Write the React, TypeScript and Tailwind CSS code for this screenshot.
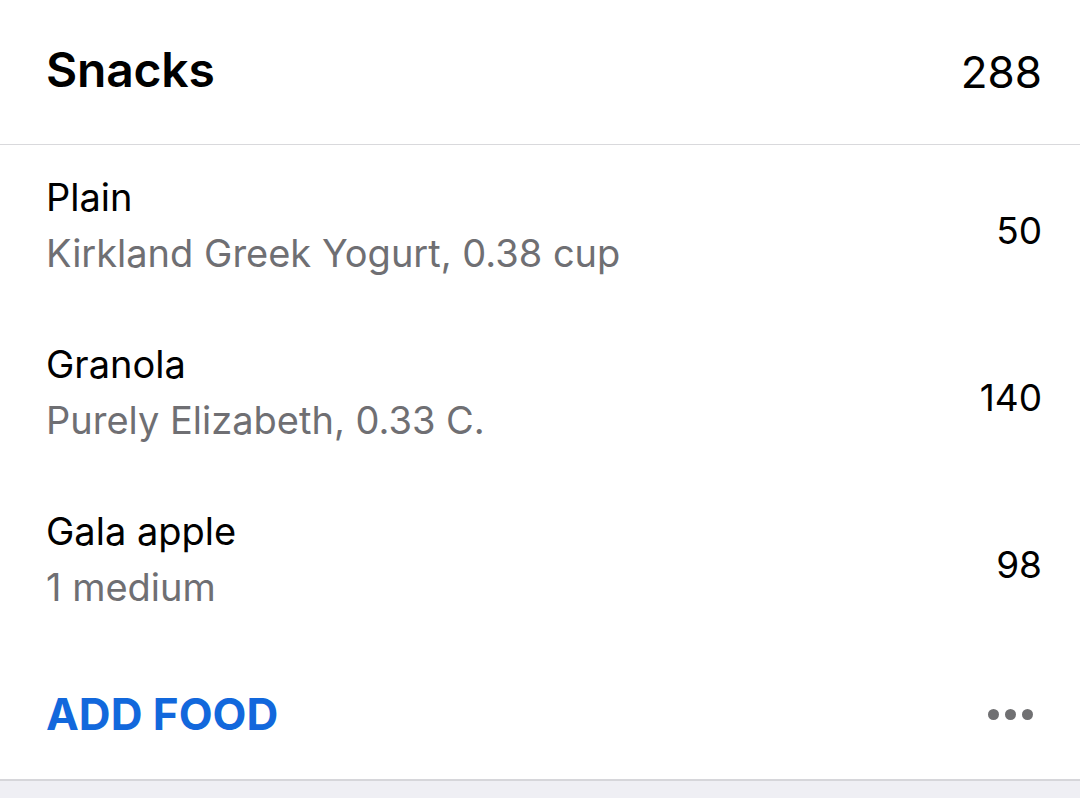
import React from "react";

const items = [
  { name: "Plain", detail: "Kirkland Greek Yogurt, 0.38 cup", cal: "50" },
  { name: "Granola", detail: "Purely Elizabeth, 0.33 C.", cal: "140" },
  { name: "Gala apple", detail: "1 medium", cal: "98" },
];

export default function App() {
  return (
    <div className="w-[1080px] h-[798px] bg-[#efeff4] overflow-hidden" style={{ fontFamily: "Inter, 'Noto Sans', sans-serif" }}>
      <div className="bg-white border-b-2 border-[#d6d6da]">
        <div className="h-[145px] flex items-center justify-between pl-[46px] pr-[38px] border-b border-[#d9d9dc]">
          <span className="text-[48px] font-semibold text-black tracking-[-0.2px] -mt-[4px]">Snacks</span>
          <span className="text-[44px] text-black -mt-[1px]">288</span>
        </div>
        {items.map((it) => (
          <div key={it.name} className="h-[167px] flex items-center justify-between pl-[46px] pr-[38px]">
            <div className="flex flex-col mb-[6px]">
              <span className="text-[38px] leading-[55px] text-black">{it.name}</span>
              <span className="text-[38px] leading-[56px] text-[#6f6f73]">{it.detail}</span>
            </div>
            <span className="text-[37px] text-black mt-[4px]">{it.cal}</span>
          </div>
        ))}
        <div className="h-[133px] flex items-center justify-between pl-[46px] pr-[38px]">
          <span className="text-[44px] font-bold text-[#1268dc] mt-[2px]">ADD FOOD</span>
          <div className="flex gap-[6px] mr-[9px] mt-[4px]">
            <span className="w-[11px] h-[11px] rounded-full bg-[#707072]" />
            <span className="w-[11px] h-[11px] rounded-full bg-[#707072]" />
            <span className="w-[11px] h-[11px] rounded-full bg-[#707072]" />
          </div>
        </div>
      </div>
    </div>
  );
}
